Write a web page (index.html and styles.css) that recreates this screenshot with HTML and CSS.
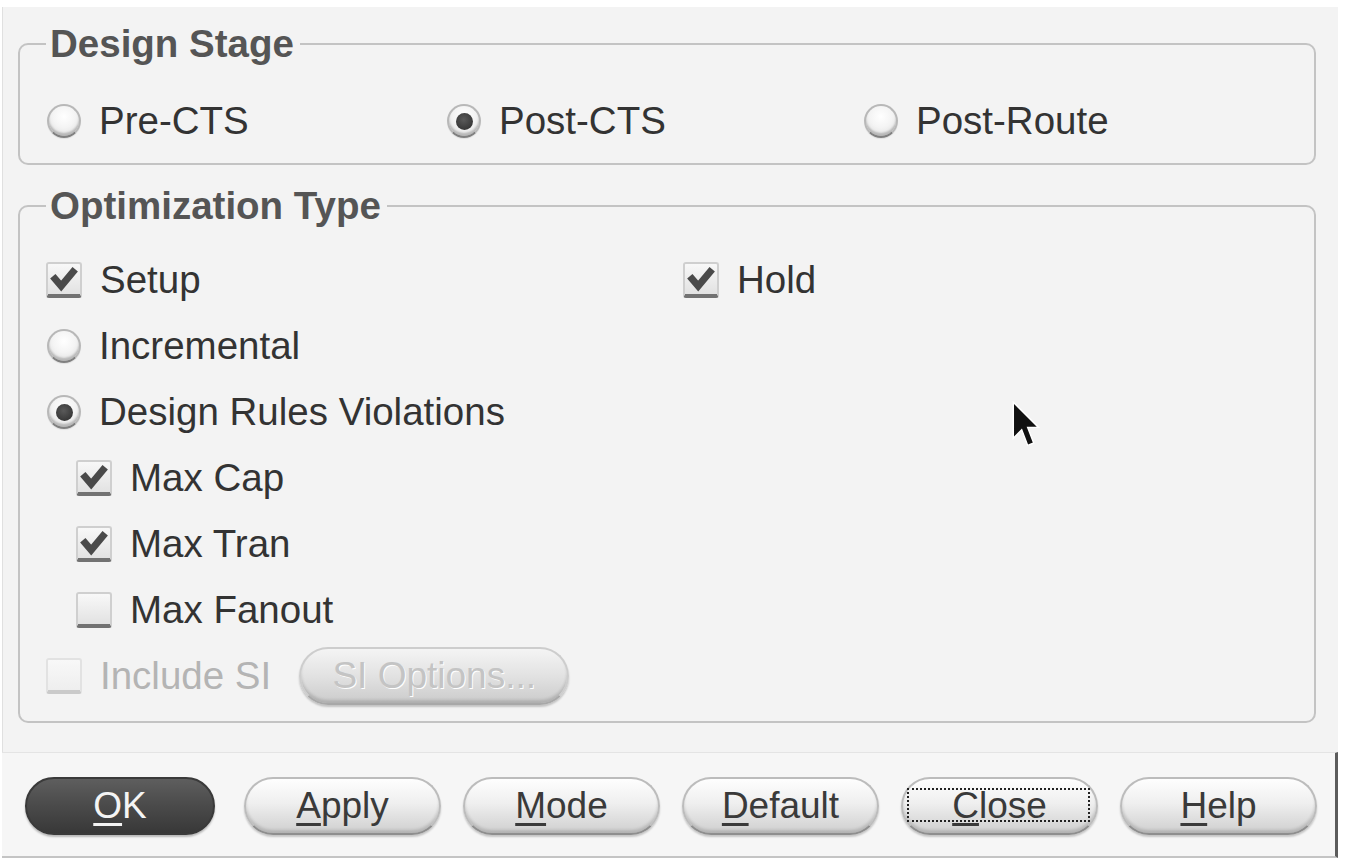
FILE: index.html
```html
<!DOCTYPE html>
<html>
<head>
<meta charset="utf-8">
<link rel="stylesheet" href="styles.css">
</head>
<body>
<div class="dialog">
  <div class="panel">
    <fieldset class="group stage">
      <legend>Design Stage</legend>
      <div class="row stage-row">
        <label class="opt"><span class="radio"></span>Pre-CTS</label>
        <label class="opt"><span class="radio on"></span>Post-CTS</label>
        <label class="opt"><span class="radio"></span>Post-Route</label>
      </div>
    </fieldset>
    <fieldset class="group opt-group">
      <legend>Optimization Type</legend>
      <div class="row two-col">
        <label class="opt"><span class="check on"><svg viewBox="0 0 20 20"><path d="M2 8 L8 15 L18 3" /></svg></span>Setup</label>
        <label class="opt"><span class="check on"><svg viewBox="0 0 20 20"><path d="M2 8 L8 15 L18 3" /></svg></span>Hold</label>
      </div>
      <div class="row"><label class="opt"><span class="radio"></span>Incremental</label></div>
      <div class="row"><label class="opt"><span class="radio on"></span>Design Rules Violations</label></div>
      <div class="row indent"><label class="opt"><span class="check on"><svg viewBox="0 0 20 20"><path d="M2 8 L8 15 L18 3" /></svg></span>Max Cap</label></div>
      <div class="row indent"><label class="opt"><span class="check on"><svg viewBox="0 0 20 20"><path d="M2 8 L8 15 L18 3" /></svg></span>Max Tran</label></div>
      <div class="row indent"><label class="opt"><span class="check"></span>Max Fanout</label></div>
      <div class="row">
        <label class="opt disabled"><span class="check"></span>Include SI</label>
        <span class="btn si-btn">SI Options...</span>
      </div>
    </fieldset>
  </div>
  <div class="buttons">
    <span class="btn default-btn"><u>O</u>K</span>
    <span class="btn"><u>A</u>pply</span>
    <span class="btn"><u>M</u>ode</span>
    <span class="btn"><u>D</u>efault</span>
    <span class="btn focus"><u>C</u>lose</span>
    <span class="btn"><u>H</u>elp</span>
  </div>
  <svg class="cursor" viewBox="0 0 24 40" width="29" height="48">
    <path d="M1 1 L1 31 L8 24 L13 37 L18 35 L13 22 L22 22 Z" fill="#111" stroke="#fff" stroke-width="1.2" stroke-linejoin="miter"/>
  </svg>
</div>
</body>
</html>
```
FILE: styles.css
```css
body {
  margin: 0;
  background: #ffffff;
  font-family: "Liberation Sans", Arial, sans-serif;
  color: #333333;
}

.dialog {
  position: relative;
  width: 1336px;
  margin-left: 2px;
  padding-top: 7px;
}

.panel {
  background: #f3f3f3;
  border-left: 1px solid #e0e0e0;
  padding: 15px 22px 29px 15px;
}

.group {
  margin: 0;
  min-width: 0;
  border: 2px solid #c3c3c3;
  border-radius: 10px;
  padding: 22px 26px 9px 26px;
}

.group legend {
  padding: 0 6px 0 4px;
  line-height: 44px;
  font-size: 38.5px;
  font-weight: bold;
  color: #555555;
}

.opt-group {
  margin-top: 19px;
  padding-top: 19px;
  padding-bottom: 12px;
}

.row {
  display: flex;
  align-items: center;
  height: 66px;
}

.stage-row {
  display: grid;
  grid-template-columns: 400px 417px auto;
  align-items: center;
}

.two-col {
  display: grid;
  grid-template-columns: 637px auto;
  align-items: center;
}

.indent {
  padding-left: 30px;
}

.opt {
  display: flex;
  align-items: center;
  gap: 18px;
  font-size: 38.5px;
  line-height: 44px;
  color: #333333;
}

.opt.disabled {
  color: #b4b4b4;
}

.radio {
  width: 34px;
  height: 34px;
  box-sizing: border-box;
  border-radius: 50%;
  border: 2px solid #b8b8b8;
  border-bottom-color: #808080;
  background: radial-gradient(circle at 50% 35%, #ffffff 0%, #f4f4f4 45%, #d8d8d8 100%);
  box-shadow: inset 0 -3px 2px rgba(0, 0, 0, 0.2), 0 1px 1px rgba(0, 0, 0, 0.08);
  display: flex;
  align-items: center;
  justify-content: center;
  flex: none;
  margin-left: 1px;
}

.radio.on::after {
  content: "";
  width: 17px;
  height: 17px;
  border-radius: 50%;
  background: radial-gradient(circle at 45% 40%, #5a5a5a 0%, #2a2a2a 100%);
}

.check {
  width: 36px;
  height: 36px;
  box-sizing: border-box;
  border: 2px solid #cfcfcf;
  border-bottom: 4px solid #727272;
  border-radius: 3px;
  background: linear-gradient(#f8f8f8, #e2e2e2);
  display: flex;
  align-items: center;
  justify-content: center;
  flex: none;
}

.disabled .check {
  border-color: #e2e2e2;
  border-bottom-color: #cacaca;
  background: linear-gradient(#f8f8f8, #eeeeee);
}

.check svg {
  width: 30px;
  height: 28px;
}

.check path {
  fill: none;
  stroke: #4a4a4a;
  stroke-width: 5;
  stroke-linecap: butt;
  stroke-linejoin: miter;
}

.btn {
  position: relative;
  display: flex;
  align-items: center;
  justify-content: center;
  box-sizing: border-box;
  width: 197px;
  height: 58px;
  border-radius: 29px;
  border: 2px solid #bcbcbc;
  border-bottom-color: #8e8e8e;
  background: linear-gradient(#fefefe 0%, #efefef 45%, #cfcfcf 100%);
  box-shadow: 0 2px 2px rgba(0, 0, 0, 0.2), inset 0 -3px 3px rgba(0, 0, 0, 0.14);
  font-size: 37px;
  color: #3a3a3a;
  flex: none;
}

.btn u {
  text-decoration-thickness: 3px;
  text-underline-offset: 5px;
}

.si-btn {
  width: 270px;
  margin-left: 28px;
  color: #c4c4c4;
  text-shadow: 1px 1px 0 #ffffff;
  border-color: #cdcdcd;
  border-bottom-color: #a8a8a8;
  background: linear-gradient(#f4f4f4 0%, #e2e2e2 50%, #cbcbcb 100%);
}

.buttons {
  display: flex;
  align-items: center;
  gap: 22px;
  height: 106px;
  box-sizing: border-box;
  padding-left: 23px;
  padding-top: 2px;
  background: #f6f6f6;
  border-top: 1px solid #e4e4e4;
  border-right: 3px solid #5c5c5c;
  border-bottom: 2px solid #c4c4c4;
}

.default-btn {
  width: 190px;
  margin-right: 7px;
  border-color: #3a3a3a;
  background: linear-gradient(#5e5e5e 0%, #4a4a4a 50%, #383838 100%);
  color: #f4f4f4;
  box-shadow: 0 2px 2px rgba(0, 0, 0, 0.25);
}

.focus::after {
  content: "";
  position: absolute;
  left: 4px;
  right: 6px;
  top: 9px;
  bottom: 11px;
  border: 2px dotted #222;
}

.cursor {
  position: absolute;
  left: 1010px;
  top: 401px;
}
```
